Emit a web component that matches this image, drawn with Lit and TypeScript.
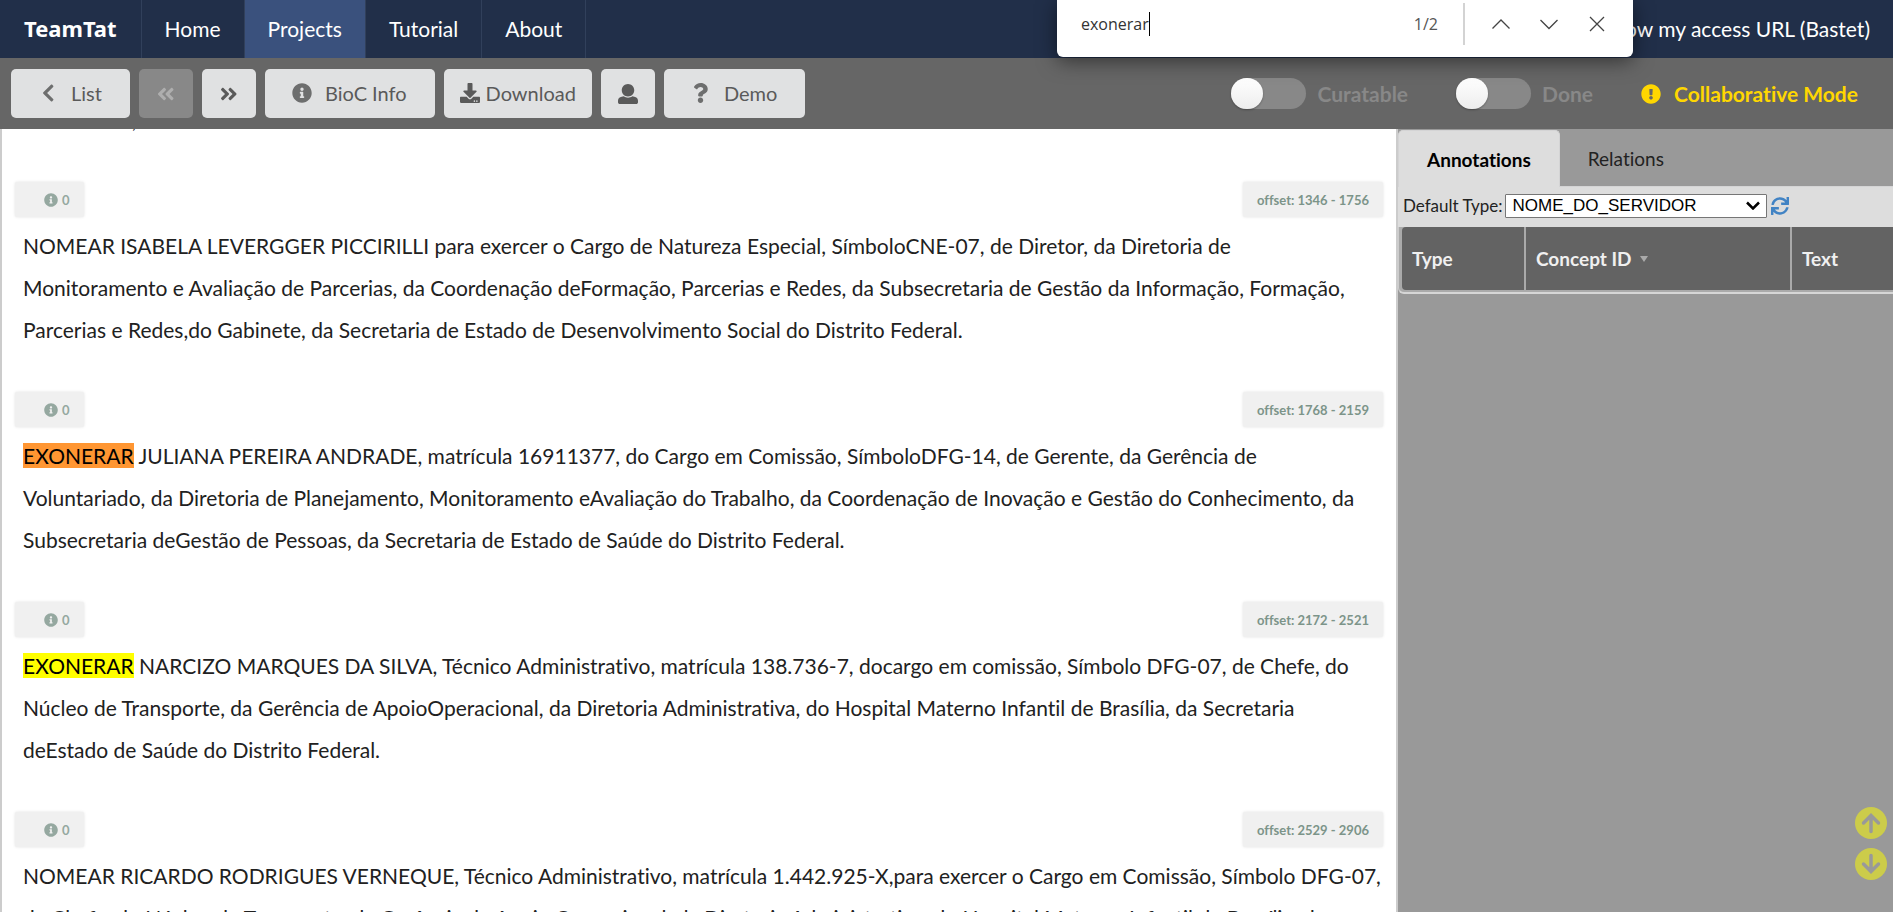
import { LitElement, html, css, svg, nothing } from "lit";
import { customElement, property, query } from "lit/decorators.js";
import { classMap } from "lit/directives/class-map.js";

type Glyph = { box: string; path: string };

const GLYPHS: Record<string, Glyph> = {
  info: {
    box: "0 0 512 512",
    path: "M256 8C119.043 8 8 119.083 8 256c0 136.997 111.043 248 248 248s248-111.003 248-248C504 119.083 392.957 8 256 8zm0 110c23.196 0 42 18.804 42 42s-18.804 42-42 42-42-18.804-42-42 18.804-42 42-42zm56 254c0 6.627-5.373 12-12 12h-88c-6.627 0-12-5.373-12-12v-24c0-6.627 5.373-12 12-12h12v-64h-12c-6.627 0-12-5.373-12-12v-24c0-6.627 5.373-12 12-12h64c6.627 0 12 5.373 12 12v100h12c6.627 0 12 5.373 12 12v24z",
  },
  warning: {
    box: "0 0 512 512",
    path: "M504 256c0 136.997-111.043 248-248 248S8 392.997 8 256C8 119.083 119.043 8 256 8s248 111.083 248 248zm-248 50c-25.405 0-46 20.595-46 46s20.595 46 46 46 46-20.595 46-46-20.595-46-46-46zm-43.673-165.346l7.418 136c.347 6.364 5.609 11.346 11.982 11.346h48.546c6.373 0 11.635-4.982 11.982-11.346l7.418-136c.375-6.874-5.098-12.654-11.982-12.654h-63.383c-6.884 0-12.356 5.78-11.981 12.654z",
  },
  download: {
    box: "0 0 512 512",
    path: "M216 0h80c13.3 0 24 10.7 24 24v168h87.7c17.8 0 26.7 21.5 14.1 34.1L269.7 378.3c-7.5 7.5-19.8 7.5-27.3 0L90.1 226.1c-12.6-12.6-3.7-34.1 14.1-34.1H192V24c0-13.3 10.7-24 24-24zm296 376v112c0 13.3-10.7 24-24 24H24c-13.3 0-24-10.7-24-24V376c0-13.3 10.7-24 24-24h146.7l49 49c20.1 20.1 52.5 20.1 72.6 0l49-49H488c13.3 0 24 10.7 24 24zm-124 88c0-11-9-20-20-20s-20 9-20 20 9 20 20 20 20-9 20-20zm64 0c0-11-9-20-20-20s-20 9-20 20 9 20 20 20 20-9 20-20z",
  },
  user: {
    box: "0 0 512 512",
    path: "M256 0c88.366 0 160 71.634 160 160s-71.634 160-160 160S96 248.366 96 160 167.634 0 256 0zm183.283 333.821l-71.313-17.828c-74.923 53.89-165.738 41.864-223.94 0l-71.313 17.828C29.981 344.505 0 382.903 0 426.955V464c0 26.51 21.49 48 48 48h416c26.51 0 48-21.49 48-48v-37.045c0-44.052-29.981-82.45-72.717-93.134z",
  },
  question: {
    box: "0 0 384 512",
    path: "M202.021 0C122.202 0 70.503 32.703 29.914 91.026c-7.363 10.58-5.093 25.086 5.178 32.874l43.138 32.709c10.373 7.865 25.132 6.026 33.253-4.148 25.049-31.381 43.63-49.449 82.757-49.449 30.764 0 68.816 19.799 68.816 49.631 0 22.552-18.617 34.134-48.993 51.164-35.423 19.86-82.299 44.576-82.299 106.405V320c0 13.255 10.745 24 24 24h72.471c13.255 0 24-10.745 24-24v-5.773c0-42.86 125.268-44.645 125.268-160.627C377.504 66.256 286.902 0 202.021 0zM192 373.459c-38.196 0-69.271 31.075-69.271 69.271 0 38.195 31.075 69.27 69.271 69.27s69.271-31.075 69.271-69.271-31.075-69.27-69.271-69.27z",
  },
  back: {
    box: "0 0 320 512",
    path: "M34.52 239.03L228.87 44.69c9.37-9.37 24.57-9.37 33.94 0l22.67 22.67c9.36 9.36 9.37 24.52.04 33.9L131.49 256l154.02 154.75c9.34 9.38 9.32 24.54-.04 33.9l-22.67 22.67c-9.37 9.37-24.57 9.37-33.94 0L34.52 272.97c-9.37-9.37-9.37-24.57 0-33.94z",
  },
  next: {
    box: "0 0 448 512",
    path: "M224.3 273l-136 136c-9.4 9.4-24.6 9.4-33.9 0l-22.6-22.6c-9.4-9.4-9.4-24.6 0-33.9l96.4-96.4-96.4-96.4c-9.4-9.4-9.4-24.6 0-33.9L54.3 103c9.4-9.4 24.6-9.4 33.9 0l136 136c9.5 9.4 9.5 24.6.1 34zm192-34l-136-136c-9.4-9.4-24.6-9.4-33.9 0l-22.6 22.6c-9.4 9.4-9.4 24.6 0 33.9l96.4 96.4-96.4 96.4c-9.4 9.4-9.4 24.6 0 33.9l22.6 22.6c9.4 9.4 24.6 9.4 33.9 0l136-136c9.4-9.2 9.4-24.4 0-33.8z",
  },
  previous: {
    box: "0 0 448 512",
    path: "M223.7 239l136-136c9.4-9.4 24.6-9.4 33.9 0l22.6 22.6c9.4 9.4 9.4 24.6 0 33.9L319.9 256l96.4 96.4c9.4 9.4 9.4 24.6 0 33.9L393.7 409c-9.4 9.4-24.6 9.4-33.9 0l-136-136c-9.5-9.4-9.5-24.6-.1-34zm-192 34l136 136c9.4 9.4 24.6 9.4 33.9 0l22.6-22.6c9.4-9.4 9.4-24.6 0-33.9L127.9 256l96.4-96.4c9.4-9.4 9.4-24.6 0-33.9L201.7 103c-9.4-9.4-24.6-9.4-33.9 0l-136 136c-9.5 9.4-9.5 24.6-.1 34z",
  },
  refresh: {
    box: "0 0 512 512",
    path: "M440.935 12.574l3.966 82.766C399.416 41.904 331.674 8 256 8 134.813 8 33.933 94.924 12.296 209.824 10.908 217.193 16.604 224 24.103 224h49.084c5.57 0 10.377-3.842 11.676-9.259C103.407 137.408 172.931 80 256 80c60.893 0 114.512 30.856 146.104 77.801l-101.53-4.865c-6.845-.328-12.574 5.133-12.574 11.986v47.411c0 6.627 5.373 12 12 12h200.333c6.627 0 12-5.373 12-12V12c0-6.627-5.373-12-12-12h-47.411c-6.853 0-12.315 5.729-11.987 12.574zM256 432c-60.895 0-114.517-30.858-146.109-77.805l101.868 4.871c6.845.327 12.573-5.134 12.573-11.986v-47.412c0-6.627-5.373-12-12-12H12c-6.627 0-12 5.373-12 12V500c0 6.627 5.373 12 12 12h47.385c6.863 0 12.328-5.745 11.985-12.599l-4.129-82.575C112.725 470.166 180.405 504 256 504c121.187 0 222.067-86.924 243.704-201.824 1.388-7.369-4.308-14.176-11.807-14.176h-49.084c-5.57 0-10.377 3.842-11.676 9.259C408.593 374.592 339.069 432 256 432z",
  },
};

@customElement("app-icon")
class AppIcon extends LitElement {
  @property() name = "info";

  static styles = css`
    :host {
      display: inline-flex;
      justify-content: center;
      flex: none;
      width: 20px;
      height: 20px;
    }
    .glyph {
      height: 100%;
      fill: currentColor;
    }
  `;

  render() {
    const glyph = GLYPHS[this.name];
    return html`<svg class="glyph" viewBox=${glyph.box} aria-hidden="true">
      ${svg`<path d=${glyph.path}></path>`}
    </svg>`;
  }
}

@customElement("site-nav")
class SiteNav extends LitElement {
  static styles = css`
    :host {
      display: flex;
      justify-content: space-between;
      height: 58px;
      background: #212f49;
      font-size: 21px;
    }
    .links {
      display: flex;
    }
    .item {
      display: flex;
      align-items: center;
      padding: 0 23px 2px;
      border-right: 1px solid #31405b;
      color: #fff;
      text-decoration: none;
      white-space: nowrap;
    }
    .brand {
      padding: 0 24px 2px;
      font: 700 22px "Noto Sans", sans-serif;
    }
    .current {
      background: #3a517d;
    }
    .account {
      border-right: 0;
    }
  `;

  render() {
    const pages = ["Home", "Projects", "Tutorial", "About"];
    return html`
      <nav class="links">
        <a class="item brand" href="#">TeamTat</a>
        ${pages.map(
          (page) => html`<a
            class=${classMap({ item: true, current: page === "Projects" })}
            href="#"
            >${page}</a
          >`
        )}
      </nav>
      <a class="item account" href="#">Show my access URL (Bastet)</a>
    `;
  }
}

@customElement("document-toolbar")
class DocumentToolbar extends LitElement {
  static styles = css`
    :host {
      display: flex;
      align-items: center;
      justify-content: space-between;
      height: 71px;
      padding: 0 35px 0 11px;
      background: #666;
      font-size: 21px;
    }
    .actions {
      display: flex;
      gap: 9px;
    }
    .button {
      display: flex;
      align-items: center;
      gap: 13px;
      height: 49px;
      padding: 0 28px 1px 27px;
      border: 0;
      border-radius: 5px;
      background: #e0e1e2;
      color: #5a5a5a;
      font: inherit;
      font-size: 20px;
      white-space: nowrap;
    }
    .button app-icon {
      opacity: 0.85;
    }
    .compact {
      gap: 6px;
      padding: 0 16px 1px;
    }
    .square {
      padding: 0 17px;
    }
    .square app-icon,
    .compact app-icon {
      opacity: 1;
    }
    .button:disabled {
      background: #888;
      color: #aeaeae;
    }
    .status {
      display: flex;
      align-items: center;
      font-weight: 700;
    }
    .switch {
      display: flex;
      align-items: center;
      gap: 11px;
      margin-right: 48px;
      color: #888;
    }
    .toggle {
      display: flex;
      appearance: none;
      width: 75px;
      height: 31px;
      margin: 0;
      border-radius: 16px;
      background: #888;
    }
    .toggle::before {
      content: "";
      width: 32px;
      height: 31px;
      border-radius: 16px;
      background: linear-gradient(#fff, #ededed);
      box-shadow: 0 1px 2px rgba(0, 0, 0, 0.3);
    }
    .toggle:checked {
      justify-content: flex-end;
    }
    .mode {
      display: flex;
      align-items: center;
      gap: 13px;
      color: #ffd700;
    }
  `;

  render() {
    return html`
      <div class="actions">
        <button class="button"><app-icon name="back"></app-icon>List</button>
        <button class="button square" aria-label="Previous document" disabled>
          <app-icon name="previous"></app-icon>
        </button>
        <button class="button square" aria-label="Next document">
          <app-icon name="next"></app-icon>
        </button>
        <button class="button"><app-icon name="info"></app-icon>BioC Info</button>
        <button class="button compact">
          <app-icon name="download"></app-icon>Download
        </button>
        <button class="button square" aria-label="Annotators">
          <app-icon name="user"></app-icon>
        </button>
        <button class="button"><app-icon name="question"></app-icon>Demo</button>
      </div>
      <div class="status">
        <label class="switch"
          ><input class="toggle" type="checkbox" />Curatable</label
        >
        <label class="switch"><input class="toggle" type="checkbox" />Done</label>
        <span class="mode"><app-icon name="warning"></app-icon>Collaborative Mode</span>
      </div>
    `;
  }
}

@customElement("find-bar")
class FindBar extends LitElement {
  static styles = css`
    :host {
      box-sizing: border-box;
      display: flex;
      align-items: center;
      width: 576px;
      height: 57px;
      padding: 0 15px 9px 24px;
      border-radius: 0 0 6px 6px;
      background: #fff;
      box-shadow: 0 4px 20px rgba(0, 0, 0, 0.5);
      color: #333;
      font: 16px "Open Sans", sans-serif;
    }
    .field {
      display: flex;
      flex: 1;
      align-items: center;
    }
    .query {
      field-sizing: content;
      padding: 0;
      border: 0;
      outline: 0;
      background: none;
      color: inherit;
      font: inherit;
    }
    .caret {
      width: 1px;
      height: 24px;
      background: #000;
    }
    .count {
      padding-right: 25px;
      color: #555;
    }
    .buttons {
      display: flex;
      align-items: center;
      height: 42px;
      padding-left: 15px;
      border-left: 2px solid #d3d3d3;
    }
    .button {
      display: grid;
      place-items: center;
      width: 42px;
      height: 36px;
      padding: 0;
      border: 0;
      background: none;
    }
    .button + .button {
      margin-left: 6px;
    }
    .mark {
      width: 20px;
      height: 20px;
      fill: none;
      stroke: #444;
      stroke-width: 1.3;
    }
  `;

  render() {
    const marks = [
      ["Previous match", "M1.5 14.5 10 6l8.500 8.500"],
      ["Next match", "M1.500 6 10 14.500 18.500 6"],
      ["Close", "M3 3 17 17M17 3 3 17"],
    ];
    return html`
      <div class="field">
        <input class="query" aria-label="Find in page" value="exonerar" />
        <span class="caret"></span>
      </div>
      <span class="count">1/2</span>
      <div class="buttons">
        ${marks.map(
          ([label, path]) => html`<button class="button" aria-label=${label}>
            <svg class="mark" viewBox="0 0 20 20">${svg`<path d=${path}></path>`}</svg>
          </button>`
        )}
      </div>
    `;
  }
}

type Passage = {
  offset: string;
  hit?: string;
  current?: boolean;
  text: string;
};

const PASSAGES: Passage[] = [
  {
    offset: "1346 - 1756",
    text: "NOMEAR ISABELA LEVERGGER PICCIRILLI para exercer o Cargo de Natureza Especial, SímboloCNE-07, de Diretor, da Diretoria de\nMonitoramento e Avaliação de Parcerias, da Coordenação deFormação, Parcerias e Redes, da Subsecretaria de Gestão da Informação, Formação,\nParcerias e Redes,do Gabinete, da Secretaria de Estado de Desenvolvimento Social do Distrito Federal.",
  },
  {
    offset: "1768 - 2159",
    hit: "EXONERAR",
    current: true,
    text: " JULIANA PEREIRA ANDRADE, matrícula 16911377, do Cargo em Comissão, SímboloDFG-14, de Gerente, da Gerência de\nVoluntariado, da Diretoria de Planejamento, Monitoramento eAvaliação do Trabalho, da Coordenação de Inovação e Gestão do Conhecimento, da\nSubsecretaria deGestão de Pessoas, da Secretaria de Estado de Saúde do Distrito Federal.",
  },
  {
    offset: "2172 - 2521",
    hit: "EXONERAR",
    text: " NARCIZO MARQUES DA SILVA, Técnico Administrativo, matrícula 138.736-7, docargo em comissão, Símbolo DFG-07, de Chefe, do\nNúcleo de Transporte, da Gerência de ApoioOperacional, da Diretoria Administrativa, do Hospital Materno Infantil de Brasília, da Secretaria\ndeEstado de Saúde do Distrito Federal.",
  },
  {
    offset: "2529 - 2906",
    text: "NOMEAR RICARDO RODRIGUES VERNEQUE, Técnico Administrativo, matrícula 1.442.925-X,para exercer o Cargo em Comissão, Símbolo DFG-07,\nde Chefe, do Núcleo de Transporte, da Gerência de Apoio Operacional, da Diretoria Administrativa, do Hospital Materno Infantil de Brasília, da\nSecretaria de Estado de Saúde do Distrito Federal.",
  },
];

@customElement("document-view")
class DocumentView extends LitElement {
  @query(".scroller") scroller!: HTMLElement;

  static styles = css`
    :host {
      display: flex;
      min-width: 0;
      min-height: 0;
      border: solid #ccc;
      border-width: 0 2px;
      background: #fff;
    }
    .scroller {
      flex: 1;
      overflow: auto;
      scrollbar-width: none;
      padding: 0 13px;
    }
    .passage {
      margin-bottom: 41px;
    }
    .meta {
      display: flex;
      justify-content: space-between;
      margin-bottom: 8px;
      font-size: 13px;
      font-weight: 700;
    }
    .tag {
      display: flex;
      align-items: center;
      gap: 4px;
      height: 35px;
      padding: 0 14px;
      border-radius: 2px;
      background: #f0f0f0;
      box-shadow: 0 0 3px rgba(0, 0, 0, 0.12);
      color: #7c9489;
    }
    .notes {
      padding-left: 29px;
      color: #95a8a0;
    }
    .notes app-icon {
      width: 14px;
      height: 14px;
    }
    .text {
      margin: 0;
      padding-left: 8px;
      color: #212121;
      font-size: 21px;
      line-height: 42px;
      white-space: pre-line;
    }
    .hit {
      background: #ff0;
      color: #000;
    }
    .hit.current {
      background: #ff9632;
    }
  `;

  firstUpdated() {
    this.scroller.scrollTop = 30;
  }

  render() {
    return html`
      <div class="scroller">
        <div class="passage"><p class="text">Distrito Fed,</p></div>
        ${PASSAGES.map(
          (p) => html`<section class="passage">
            <div class="meta">
              <span class="tag notes"><app-icon name="info"></app-icon>0</span>
              <span class="tag">offset: ${p.offset}</span>
            </div>
            <p class="text">${p.hit
                ? html`<mark class=${classMap({ hit: true, current: !!p.current })}
                    >${p.hit}</mark
                  >`
                : nothing}${p.text}</p>
          </section>`
        )}
      </div>
    `;
  }
}

@customElement("annotation-panel")
class AnnotationPanel extends LitElement {
  static styles = css`
    :host {
      display: block;
      overflow: hidden;
      background: #999;
      color: #222;
      font-size: 19px;
    }
    .tabs {
      display: flex;
      align-items: flex-end;
      height: 56px;
      padding-top: 1px;
      border-bottom: 1px solid #d4d4d5;
      font-size: 19px;
    }
    .tab {
      height: 56px;
      padding: 0 28px;
      border: 0;
      background: none;
      color: #222;
      font: inherit;
    }
    .tab.active {
      height: 57px;
      margin-bottom: -1px;
      border: 1px solid #d4d4d5;
      border-bottom: 0;
      border-radius: 5px 5px 0 0;
      background: #ddd;
      color: #000;
      font-weight: 700;
    }
    .options {
      display: flex;
      align-items: center;
      gap: 2px;
      height: 37px;
      padding: 0 0 3px 5px;
      background: #ddd;
      font-size: 17px;
    }
    .picker {
      display: grid;
      align-items: center;
    }
    .types,
    .arrow {
      grid-area: 1 / 1;
    }
    .types {
      appearance: none;
      width: 262px;
      height: 24px;
      padding: 0 7px;
      border: 1px solid #767676;
      border-radius: 1px;
      background: #fff;
      color: #000;
      font: 17px "Liberation Sans", sans-serif;
    }
    .arrow {
      justify-self: end;
      width: 14px;
      height: 9px;
      margin-right: 7px;
      fill: none;
      stroke: #000;
      stroke-width: 2.5;
      pointer-events: none;
    }
    .reload {
      display: flex;
      padding: 0 2px;
      border: 0;
      background: none;
      color: #4183c4;
    }
    .reload app-icon {
      width: 18px;
      height: 18px;
    }
    .frame {
      padding: 0 0 2px 3px;
      border-bottom: 2px solid #d6d6d6;
      border-radius: 0 0 0 6px;
      background: #aaa;
      border-left: 1px solid #ccc;
    }
    .grid {
      width: 620px;
      border-spacing: 0;
      table-layout: fixed;
    }
    .head {
      height: 63px;
      padding: 0 10px;
      border-right: 2px solid #aaa;
      background: #636363;
      color: #f0f0f0;
      font-size: 19px;
      font-weight: 700;
      text-align: left;
    }
    .head:first-child {
      border-radius: 4px 0 0 4px;
    }
    .type {
      width: 102px;
    }
    .concept {
      width: 244px;
    }
    .label {
      display: flex;
      align-items: center;
      gap: 8px;
    }
    .sort {
      width: 8px;
      height: 6px;
      fill: #aaa;
    }
  `;

  render() {
    return html`
      <div class="tabs" role="tablist">
        <button class="tab active" role="tab" aria-selected="true">Annotations</button>
        <button class="tab" role="tab" aria-selected="false">Relations</button>
      </div>
      <div class="options">
        <label for="types">Default Type:</label>
        <span class="picker">
          <select class="types" id="types">
            <option>NOME_DO_SERVIDOR</option>
          </select>
          <svg class="arrow" viewBox="0 0 14 9"><path d="M1 1.500 7 7.500 13 1.500"></path></svg>
        </span>
        <button class="reload" aria-label="Refresh"><app-icon name="refresh"></app-icon></button>
      </div>
      <div class="frame">
        <table class="grid">
          <thead>
            <tr>
              <th class="head type">Type</th>
              <th class="head concept">
                <span class="label"
                  >Concept ID<svg class="sort" viewBox="0 0 8 6"><path d="M0 0h8L4 6z"></path></svg
                ></span>
              </th>
              <th class="head">Text</th>
            </tr>
          </thead>
        </table>
      </div>
    `;
  }
}

@customElement("app-root")
class AppRoot extends LitElement {
  static styles = css`
    :host {
      position: relative;
      display: grid;
      grid-template-rows: auto auto minmax(0, 1fr);
      height: 100vh;
      overflow: hidden;
      font-family: Lato, sans-serif;
      font-variant-ligatures: none;
    }
    .workspace {
      display: grid;
      grid-template-columns: minmax(0, 1fr) 495px;
      min-height: 0;
    }
    .find {
      position: absolute;
      top: 0;
      right: 260px;
    }
    .jumps {
      position: absolute;
      right: 6px;
      bottom: 32px;
      display: grid;
      gap: 9px;
    }
    .jump {
      display: flex;
      padding: 0;
      border: 0;
      background: none;
    }
    .disc {
      width: 32px;
      height: 32px;
      fill: #cccc4a;
    }
    .stem {
      fill: none;
      stroke: #999;
      stroke-width: 3.500;
      stroke-linecap: round;
    }
  `;

  render() {
    return html`
      <site-nav></site-nav>
      <document-toolbar></document-toolbar>
      <main class="workspace">
        <document-view></document-view>
        <annotation-panel></annotation-panel>
      </main>
      <find-bar class="find"></find-bar>
      <div class="jumps">
        <button class="jump" aria-label="Previous passage">
          <svg class="disc" viewBox="0 0 32 32">
            <circle cx="16" cy="16" r="16"></circle>
            <path class="stem" d="M16 24.500V9M8.500 16 16 8.500 23.500 16"></path>
          </svg>
        </button>
        <button class="jump" aria-label="Next passage">
          <svg class="disc" viewBox="0 0 32 32">
            <circle cx="16" cy="16" r="16"></circle>
            <path class="stem" d="M16 7.500V23M8.500 16 16 23.500 23.500 16"></path>
          </svg>
        </button>
      </div>
    `;
  }
}
